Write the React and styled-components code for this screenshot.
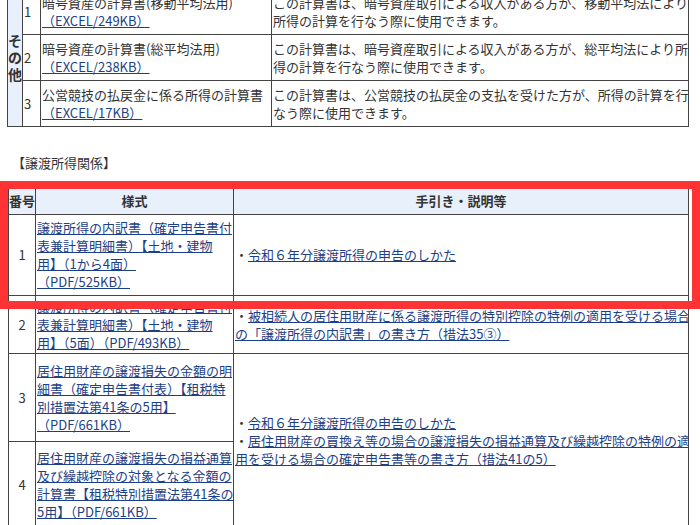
import React from "react";
import styled, { createGlobalStyle } from "styled-components";

const G = createGlobalStyle`
  html,body{margin:0;padding:0;background:#fff;overflow:hidden;}
  body{font-family:"Noto Sans CJK JP","Noto Sans",sans-serif;font-size:13px;color:#333;}
`;
const Page = styled.div`position:relative;width:700px;height:525px;overflow:hidden;`;
const Table = styled.table`
  border-collapse:collapse;table-layout:fixed;margin-left:${p=>p.$ml}px;margin-top:${p=>p.$mt||0}px;
  width:${p=>p.$w}px;line-height:18px;
`;
const Td = styled.td`
  border:1px solid #444;padding:0 1px;vertical-align:middle;white-space:nowrap;overflow:hidden;
  text-align:${p=>p.$c?"center":"left"};height:${p=>p.$h?p.$h+"px":"auto"};
  background:${p=>p.$bg||"#fff"};font-weight:${p=>p.$b?"bold":"normal"};
`;
const Side = styled(Td)`background:#e8f0fb;font-weight:bold;font-size:14px;line-height:17px;padding:0;text-align:center;white-space:normal;`;
const A = styled.a`color:#1d3f87;text-decoration:underline;`;
const Heading = styled.div`margin:27px 0 0 12px;height:18px;line-height:18px;`;
const Red = styled.div`position:absolute;left:0;top:181px;width:684px;height:112px;border:8px solid #ff3333;pointer-events:none;`;

export default function App(){
  return <Page><G/>
    <Table $ml={7} $mt={-12} $w={682}>
      <colgroup><col style={{width:15}}/><col style={{width:18}}/><col style={{width:231}}/><col/></colgroup>
      <tbody>
        <tr><Side rowSpan={3}>その他</Side><Td $h={45}>1</Td><Td>暗号資産の計算書(移動平均法用)<br/><A>（EXCEL/249KB）</A></Td><Td>この計算書は、暗号資産取引による収入がある方が、移動平均法により<br/>所得の計算を行なう際に使用できます。</Td></tr>
        <tr><Td $h={45}>2</Td><Td>暗号資産の計算書(総平均法用)<br/><A>（EXCEL/238KB）</A></Td><Td>この計算書は、暗号資産取引による収入がある方が、総平均法により所<br/>得の計算を行なう際に使用できます。</Td></tr>
        <tr><Td $h={45}>3</Td><Td>公営競技の払戻金に係る所得の計算書<br/><A>（EXCEL/17KB）</A></Td><Td>この計算書は、公営競技の払戻金の支払を受けた方が、所得の計算を行<br/>なう際に使用できます。</Td></tr>
      </tbody>
    </Table>
    <Heading>【譲渡所得関係】</Heading>
    <Table $ml={8} $mt={14} $w={681}>
      <colgroup><col style={{width:27}}/><col style={{width:198}}/><col/></colgroup>
      <tbody>
        <tr><Td $h={27} $c $b $bg="#e8f0fb" style={{padding:0}}>番号</Td><Td $c $b $bg="#e8f0fb">様式</Td><Td $c $b $bg="#e8f0fb">手引き・説明等</Td></tr>
        <tr><Td $h={80} $c>1</Td><Td><A>譲渡所得の内訳書（確定申告書付<br/>表兼計算明細書）【土地・建物<br/>用】（1から4面）<br/>（PDF/525KB）</A></Td><Td>・<A>令和６年分譲渡所得の申告のしかた</A></Td></tr>
        <tr><Td $h={57} $c>2</Td><Td><A>譲渡所得の内訳書（確定申告書付<br/>表兼計算明細書）【土地・建物<br/>用】（5面）（PDF/493KB）</A></Td><Td>・<A>被相続人の居住用財産に係る譲渡所得の特別控除の特例の適用を受ける場合<br/>の「譲渡所得の内訳書」の書き方（措法35③）</A></Td></tr>
        <tr><Td $h={87} $c>3</Td><Td><A>居住用財産の譲渡損失の金額の明<br/>細書（確定申告書付表）【租税特<br/>別措置法第41条の5用】<br/>（PDF/661KB）</A></Td>
          <Td rowSpan={2}>・<A>令和６年分譲渡所得の申告のしかた</A><br/>・<A>居住用財産の買換え等の場合の譲渡損失の損益通算及び繰越控除の特例の適<br/>用を受ける場合の確定申告書等の書き方（措法41の5）</A></Td></tr>
        <tr><Td $h={86} $c>4</Td><Td><A>居住用財産の譲渡損失の損益通算<br/>及び繰越控除の対象となる金額の<br/>計算書【租税特別措置法第41条の<br/>5用】（PDF/661KB）</A></Td></tr>
      </tbody>
    </Table>
    <Red/>
  </Page>;
}
